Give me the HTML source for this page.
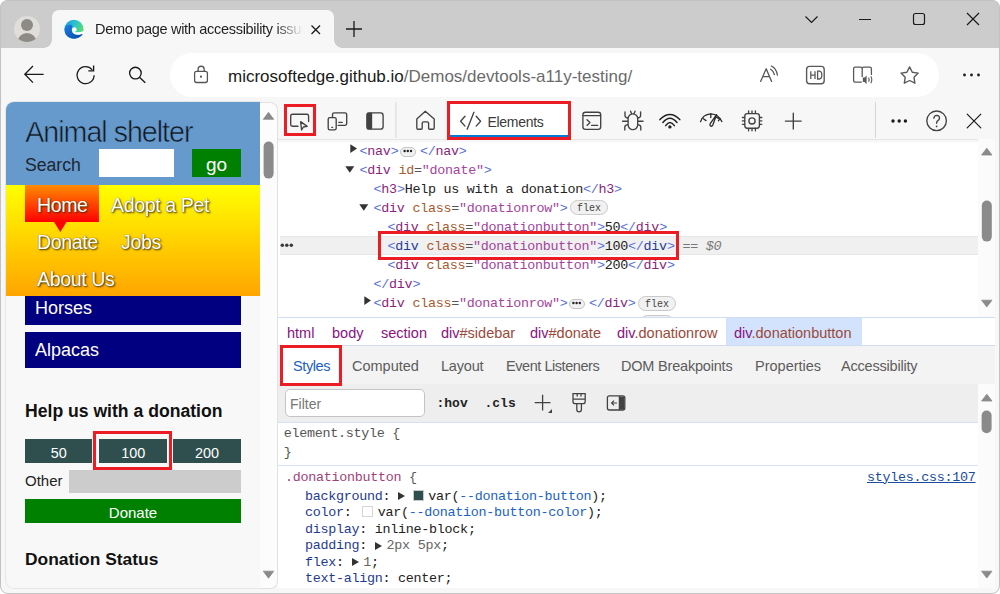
<!DOCTYPE html>
<html><head><meta charset="utf-8">
<style>
*{box-sizing:border-box;margin:0;padding:0}
html,body{width:1000px;height:594px;overflow:hidden;background:#fff}
body{font-family:"Liberation Sans",sans-serif;position:relative}
.a{position:absolute}
.mono{font-family:"Liberation Mono",monospace}
svg{position:absolute;overflow:visible}
#win{left:0;top:0;width:1000px;height:594px;border-radius:8px;background:#f7f7f7;overflow:hidden}
#winb{left:0;top:0;width:1000px;height:594px;border-radius:8px;border:1px solid #c2c2c2;pointer-events:none}
#strip{left:0;top:0;width:1000px;height:48px;background:#cccccc}
#tab{left:52px;top:10px;width:282px;height:38px;background:#f7f7f7;border-radius:7px 7px 0 0}
#tab:before,#tab:after{content:"";position:absolute;bottom:0;width:8px;height:8px}
#tab:before{left:-8px;background:radial-gradient(circle at 0 0,#cccccc 7.5px,#f7f7f7 8px)}
#tab:after{right:-8px;background:radial-gradient(circle at 100% 0,#cccccc 7.5px,#f7f7f7 8px)}
#addr{left:170px;top:53px;width:769px;height:44px;background:#fff;border-radius:22px}
#page{left:6px;top:102px;width:253.7px;height:486px;border-radius:8px 0 0 8px;overflow:hidden;background:#f8f8f8;box-shadow:0 0 0 1px #e6e6e6}
#dt{left:278px;top:102px;width:717px;height:486px;background:#fff;overflow:hidden}

.nav{font-size:19.5px;letter-spacing:-0.35px;line-height:24px;color:#fff;white-space:nowrap;text-shadow:1px 1px 2px #3a2a00,0 0 1px #6a5000}
.blk{width:216px;background:#000080;color:#fff;font-size:18px;padding-left:10px}
.dbtn{height:24px;background:#2f4f4f;color:#fff;font-size:14.4px;line-height:28px;text-align:center}

.dom{font-size:13.4px;letter-spacing:-0.28px;line-height:19px;margin-top:1px;white-space:pre;color:#333}
.dom .b{color:#5a72d6}.dom .t{color:#8a1f7c}.dom .n{color:#a65a2e}.dom .e{color:#555}.dom .v{color:#a3449c}.dom .x{color:#222}
.dom.sel .t{color:#1f3b9a}
.dots{display:inline-block;vertical-align:top;width:15.6px;height:10.5px;margin:5.1px 4.2px 0 1.7px;border:1px solid #c4c4c4;background:#f1f1f1;border-radius:5.5px;font-size:0;color:transparent}
.badge{height:15px;border:1px solid #c9c9c9;background:#f1f1f1;border-radius:8px;font-family:"Liberation Mono",monospace;font-size:10px;line-height:15px;text-align:center;color:#444}

.crumbs{top:322.5px;font-size:14.5px;line-height:20px;color:#881280;white-space:nowrap}
.crumbs .ci{color:#9a4a3a}
.tabs{top:356px;font-size:14.5px;line-height:20px;color:#5c5c5c;white-space:nowrap}
.css{font-size:13.4px;letter-spacing:-0.28px;line-height:19px;white-space:pre}
.css2{font-size:13.4px;letter-spacing:-0.28px;line-height:16.5px;white-space:pre;color:#222}
.css2 .p{color:#1f3a93}.css2 .vv{color:#1a62c4}
.tri{display:inline-block;width:0;height:0;border-left:7.4px solid #333;border-top:4.2px solid transparent;border-bottom:4.2px solid transparent;margin-right:4.8px;vertical-align:-0.5px}
.sw{display:inline-block;width:10.8px;height:10.6px;border:1px solid #c8c8c8;vertical-align:-1px}
</style></head><body>
<div id="win" class="a">
  <div id="strip" class="a"></div>
  <div id="tab" class="a"></div>
  
  <!-- avatar -->
  <svg style="left:0;top:0" width="60" height="48">
    <defs><clipPath id="avc"><circle cx="27" cy="29" r="13"/></clipPath></defs>
    <circle cx="27" cy="29" r="13" fill="#e0dedb"/>
    <circle cx="27" cy="25" r="6" fill="#8e8a86"/>
    <ellipse cx="27" cy="42.5" rx="9.5" ry="9.5" fill="#8e8a86" clip-path="url(#avc)"/>
  </svg>
  <!-- edge logo -->
  <svg style="left:0;top:0" width="120" height="48">
    <defs>
      <linearGradient id="eg1" x1="0" y1="0.3" x2="1" y2="0.7">
        <stop offset="0" stop-color="#1e9de0"/><stop offset="0.45" stop-color="#2dc3cf"/><stop offset="1" stop-color="#5de55f"/>
      </linearGradient>
      <linearGradient id="eg2" x1="0" y1="0" x2="1" y2="1">
        <stop offset="0" stop-color="#1a7fe0"/><stop offset="1" stop-color="#0a45a8"/>
      </linearGradient>
    </defs>
    <circle cx="74" cy="29.2" r="9.5" fill="url(#eg1)"/>
    <path d="M64.5 30 C64.6 26 68.5 24.2 71.5 25 C73.2 25.6 72.4 27.2 72 29.4 C71.6 32.6 74.6 34.9 78.2 34.7 C80.2 34.6 81.8 34.2 83.1 33.6 C81.4 36.9 78.2 38.8 74 38.8 C68.8 38.8 64.5 34.8 64.5 30Z" fill="url(#eg2)"/>
    <circle cx="74.3" cy="29.6" r="2.4" fill="#fff"/>
    <path d="M71.9 30 C72.2 31.6 74 32.2 76 32.3 C78.5 32.4 81.5 32 84 31 L84 33.2 C81.6 34.3 80 34.6 78 34.7 C74.5 34.9 71.8 32.8 71.9 30Z" fill="#fff"/>
  </svg>
  <div class="a" style="left:95px;top:20px;width:210px;height:20px;font-size:14.5px;letter-spacing:-0.3px;line-height:18px;color:#1f1f1f;white-space:nowrap;overflow:hidden;-webkit-mask-image:linear-gradient(90deg,#000 180px,transparent 208px)">Demo page with accessibility issues</div>
  <!-- tab close -->
  <svg style="left:0;top:0" width="400" height="48"><path d="M311.5 25.5 L320 34 M320 25.5 L311.5 34" stroke="#1a1a1a" stroke-width="1.3" fill="none"/></svg>
  <!-- new tab plus -->
  <svg style="left:0;top:0" width="400" height="48"><path d="M354 21 V37 M346 29 H362" stroke="#1a1a1a" stroke-width="1.3" fill="none"/></svg>
  <!-- window controls -->
  <svg style="left:0;top:0" width="1000" height="48">
    <path d="M805.5 16.5 L811.5 22.5 L817.5 16.5" stroke="#1a1a1a" stroke-width="1.2" fill="none"/>
    <path d="M859 19.5 H871" stroke="#1a1a1a" stroke-width="1.2"/>
    <rect x="913.5" y="13.5" width="11" height="11" rx="2" stroke="#1a1a1a" stroke-width="1.2" fill="none"/>
    <path d="M967 13 L979 25 M979 13 L967 25" stroke="#1a1a1a" stroke-width="1.2" fill="none"/>
  </svg>
  <!-- nav buttons -->
  <svg style="left:0;top:48" width="200" height="54">
  </svg>
  <svg style="left:0;top:0" width="200" height="100">
    <path d="M24.8 74.3 H43.6 M33 66 L24.8 74.3 L33 82.6" stroke="#1a1a1a" stroke-width="1.3" fill="none"/>
    <path d="M94.1 75.2 A8.5 8.5 0 1 1 92.2 69.8" stroke="#1a1a1a" stroke-width="1.3" fill="none"/>
    <path d="M93.6 65.6 V70.9 H88.3" stroke="#1a1a1a" stroke-width="1.4" fill="none" stroke-linejoin="miter"/>
    <circle cx="135.4" cy="73.1" r="5.8" stroke="#1a1a1a" stroke-width="1.35" fill="none"/>
    <path d="M139.7 77.5 L145.3 82.8" stroke="#1a1a1a" stroke-width="1.4" fill="none"/>
  </svg>

  <div id="addr" class="a"></div>
  <svg style="left:0;top:0" width="1000" height="100">
    <path d="M198.1 71.3 V69.3 A3.05 3.05 0 0 1 204.2 69.3 V71.3" stroke="#555" stroke-width="1.3" fill="none"/>
    <rect x="194.6" y="71.3" width="12.8" height="11.2" rx="2" stroke="#555" stroke-width="1.3" fill="none"/>
    <circle cx="201" cy="76.7" r="1.1" fill="#555"/>
  </svg>
  <div class="a" style="left:228px;top:66.5px;font-size:17px;line-height:20px;white-space:nowrap;color:#1a1a1a">microsoftedge.github.io<span style="color:#6b6b6b">/Demos/devtools-a11y-testing/</span></div>
  <svg style="left:0;top:0" width="1000" height="100">
    <!-- read aloud A -->
    <path d="M760.6 81.4 L766.2 68.8 L771.6 81.4 M763.2 76.7 H769.6" stroke="#555" stroke-width="1.3" fill="none" stroke-linecap="round" stroke-linejoin="round"/>
    <path d="M770.6 69.2 Q773.6 70.8 774.4 74.6 M771.4 66 Q776.4 68.4 777.4 75" stroke="#555" stroke-width="1.3" fill="none" stroke-linecap="round"/>
    <!-- HD -->
    <rect x="806.6" y="66.4" width="17.6" height="17.4" rx="3" stroke="#5a5a5a" stroke-width="1.4" fill="none"/>
    <path d="M810.8 71.2 V79 M815 71.2 V79 M810.8 75.1 H815 M817.6 71.2 V79 H819.2 Q821.8 79 821.8 75.1 Q821.8 71.2 819.2 71.2 Z" stroke="#5a5a5a" stroke-width="1.3" fill="none"/>
    <!-- reader -->
    <path d="M861.8 82.2 H855 Q853.6 82.2 853.6 80.8 V68.6 Q853.6 67.2 855 67.2 H860.6 Q862.2 67.2 862.2 68.8 V77 M862.2 68.8 Q862.2 67.2 863.8 67.2 H869.8 Q871.4 67.2 871.4 68.8 V75" stroke="#5a5a5a" stroke-width="1.3" fill="none"/>
    <path d="M862.8 77.6 H864.6 L866.6 75.4 V84.2 L864.6 82 H862.8 Z" fill="#5a5a5a"/>
    <path d="M868.6 77.4 Q869.8 79.6 868.6 81.8 M870.8 76.2 Q872.8 79.6 870.8 83.2" stroke="#5a5a5a" stroke-width="1.1" fill="none"/>
    <!-- star -->
    <path d="M909.6 66.9 L912.3 72.2 L918.2 73.1 L914.0 77.3 L914.9 83.2 L909.6 80.5 L904.3 83.2 L905.2 77.3 L901.0 73.1 L906.9 72.2 Z" stroke="#5a5a5a" stroke-width="1.4" fill="none" stroke-linejoin="round"/>
    <!-- more dots -->
    <circle cx="964.5" cy="75" r="1.4" fill="#1a1a1a"/><circle cx="971.5" cy="75" r="1.4" fill="#1a1a1a"/><circle cx="978.5" cy="75" r="1.4" fill="#1a1a1a"/>
  </svg>

  <!-- PAGE -->
  
  <div id="page" class="a">
    <div class="a" style="left:0;top:0;width:254px;height:82.5px;background:#6699cc"></div>
    <div class="a" id="t_title" style="left:19.3px;top:13.8px;font-size:28.6px;letter-spacing:-1px;line-height:32px;color:#101820;-webkit-text-stroke:0.6px #6699cc;white-space:nowrap">Animal shelter</div>
    <div class="a" id="t_search" style="left:19px;top:53px;font-size:17.6px;line-height:20px;color:#1e2630">Search</div>
    <div class="a" style="left:92.5px;top:47.4px;width:75px;height:27.2px;background:#fff"></div>
    <div class="a" style="left:186px;top:47px;width:49px;height:27.7px;background:#008000;color:#fff;font-size:19px;line-height:32px;text-align:center">go</div>
    <div class="a" style="left:0;top:82.5px;width:254px;height:111.5px;background:linear-gradient(#ffff00,#ffa500)"></div>
    <div class="a" style="left:19px;top:83px;width:73.6px;height:36.8px;background:linear-gradient(#ff8c00,#ff0000)"></div>
    <svg style="left:0;top:0" width="254" height="200"><path d="M47.9 119.7 L54.3 129.9 L60.7 119.7Z" fill="#ff0000"/></svg>
    <div class="a nav" style="left:31px;top:91px">Home</div>
    <div class="a nav" style="left:105px;top:91px">Adopt a Pet</div>
    <div class="a nav" style="left:31px;top:128px">Donate</div>
    <div class="a nav" style="left:115px;top:128px">Jobs</div>
    <div class="a nav" style="left:31px;top:165px">About Us</div>
    <div class="a blk" style="left:19px;top:194px;height:29px;line-height:25px">Horses</div>
    <div class="a blk" style="left:19px;top:229.6px;height:36px;line-height:36px">Alpacas</div>
    <div class="a" style="left:19px;top:299px;font-size:17.6px;line-height:20px;font-weight:bold;color:#111">Help us with a donation</div>
    <div class="a dbtn" style="left:19px;top:337.3px;width:67.4px">50</div>
    <div class="a dbtn" style="left:93px;top:337.3px;width:68.3px">100</div>
    <div class="a dbtn" style="left:167px;top:337.3px;width:68px">200</div>
    <div class="a" style="left:19px;top:370px;font-size:15px;line-height:18px;color:#222">Other</div>
    <div class="a" style="left:62.8px;top:367.9px;width:172.2px;height:22.7px;background:#cccccc"></div>
    <div class="a" style="left:19px;top:397px;width:216px;height:24.4px;background:#008000;color:#fff;font-size:15px;line-height:27.5px;text-align:center">Donate</div>
    <div class="a" style="left:19px;top:447px;font-size:17.4px;line-height:20px;font-weight:bold;color:#111">Donation Status</div>
    <div class="a" style="left:87.2px;top:329.3px;width:79px;height:39px;border:3px solid #ec1c24"></div>
  </div>
  <div class="a" style="left:259.7px;top:102px;width:18.5px;height:486.5px;background:#fcfcfc;border-radius:0 8px 8px 0;border:1px solid #e2e2e2;border-left:none"></div>
  <svg style="left:0;top:0" width="300" height="594">
    <path d="M263.3 119.3 L268.5 112.3 L273.7 119.3Z" fill="#8a8a8a" stroke="#8a8a8a" stroke-width="0.8" stroke-linejoin="round"/>
    <rect x="263.6" y="141.6" width="10" height="37" rx="5" fill="#8a8a8a"/>
    <path d="M263.3 571.2 L268.5 578.2 L273.7 571.2Z" fill="#8a8a8a" stroke="#8a8a8a" stroke-width="0.8" stroke-linejoin="round"/>
  </svg>

  <!-- DEVTOOLS -->

  <div id="dt" class="a"></div>
  <!-- devtools toolbar -->
  <div class="a" style="left:278px;top:102px;width:717px;height:38px;background:#f7f7f7;border-bottom:1px solid #e6e6e6"></div>
  <div class="a" style="left:278px;top:140px;width:700px;height:4px;background:linear-gradient(#f4f4f4,#fff)"></div>
  <div class="a" style="left:450px;top:104px;width:118.5px;height:34.5px;background:#fff"></div>
  <div class="a" style="left:450px;top:135px;width:118.5px;height:2px;background:#0078d4"></div>
  <svg style="left:0;top:0" width="1000" height="140" fill="none" stroke="#424242" stroke-width="1.35" stroke-linecap="round" stroke-linejoin="round">
    <!-- inspect -->
    <path d="M298 126.2 H292.5 Q290.7 126.2 290.7 124.4 V116 Q290.7 114.2 292.5 114.2 H306.8 Q308.6 114.2 308.6 116 V121.5"/>
    <path d="M300.6 121.6 L301.6 130 L303.4 127 L307.2 126.4 Z"/>
    <!-- device -->
    <path d="M332.5 117 V114.6 Q332.5 112.9 334.2 112.9 H345 Q346.7 112.9 346.7 114.6 V123.6 Q346.7 125.3 345 125.3 H338.2"/>
    <rect x="328.2" y="117.6" width="8" height="12.2" rx="1.6"/>
    <path d="M331.8 127.3 H332.6 M338.8 122.3 H342.2"/>
    <!-- dock -->
    <rect x="366.9" y="112.9" width="16.2" height="16.2" rx="2.4"/>
    <path d="M367.5 113.5 H371.5 V128.5 H367.5 Z" fill="#424242"/>
    <!-- home -->
    <path d="M425.3 111.2 L416.8 118.9 V128 Q416.8 129.2 418 129.2 H421.2 Q422.2 129.2 422.2 128.2 V123.2 Q422.2 121.8 423.6 121.8 H427.2 Q428.6 121.8 428.6 123.2 V128.2 Q428.6 129.2 429.6 129.2 H433 Q434.2 129.2 434.2 128 V118.9 Z"/>
    <!-- elements -->
    <path d="M465 116.3 L460.6 121.2 L465 126.1 M476.2 116.3 L480.6 121.2 L476.2 126.1 M473.9 112.3 L467.2 129.2"/>
    <!-- console -->
    <rect x="582.9" y="112.2" width="17.8" height="17.2" rx="2.6"/>
    <path d="M583 115.6 H600.6"/>
    <path d="M587 119.8 L590 122.6 L587 125.4 M591.6 125.4 H597.6"/>
    <!-- bug -->
    <path d="M630.6 111.2 L631.6 113.8 M635 111.2 L634 113.8"/>
    <rect x="628.1" y="113.8" width="9.6" height="15.8" rx="4.8"/>
    <path d="M625 111.8 V115.8 Q625 117.4 627.6 118 M640.6 111.8 V115.8 Q640.6 117.4 638 118 M622.6 121.2 H627.6 M643 121.2 H638 M627.6 124.6 Q624.8 125.2 624.8 127 V130 M638 124.6 Q640.8 125.2 640.8 127 V130"/>
    <!-- wifi -->
    <path d="M659.9 119.6 Q669.9 109.2 679.8 119.6 M662.9 122.4 Q669.9 113.9 677 122.4 M665.7 125.6 Q669.9 119.2 674.4 125.6" stroke="#222" stroke-width="1.5"/>
    <circle cx="669.9" cy="126.9" r="1.7" fill="#222" stroke="none"/>
    <!-- perf -->
    <path d="M700.6 121.6 Q702.6 114.4 710.8 113.8 Q718.6 114.2 721.8 121.6" stroke="#2a2a2a" stroke-width="1.35"/>
    <path d="M703.4 118.8 L706 120.6 M710.8 114 V117.6 M718.4 120.8 L720 118.6 M716 117 L718.4 118.4" stroke="#2a2a2a" stroke-width="1.3"/>
    <path d="M716.6 114.6 L712.8 125 Q711.8 126.8 710.4 126 Q709.4 125.2 710.4 123.4 Z" stroke="#2a2a2a" stroke-width="1.3"/>
    <!-- memory -->
    <rect x="744.8" y="113.6" width="14.6" height="14.6" rx="2.4"/>
    <circle cx="752" cy="120.9" r="3.1"/>
    <path d="M748.6 111 V113.4 M752 111 V113.4 M755.4 111 V113.4 M748.6 128.4 V130.8 M752 128.4 V130.8 M755.4 128.4 V130.8 M742.4 117.5 H744.6 M742.4 120.9 H744.6 M742.4 124.3 H744.6 M759.6 117.5 H761.8 M759.6 120.9 H761.8 M759.6 124.3 H761.8"/>
    <!-- plus -->
    <path d="M793.3 113.2 V129 M785.4 121.1 H801.2"/>
    <!-- help -->
    <circle cx="936.6" cy="120.8" r="9.8"/>
    <path d="M933.9 118.2 Q934.1 115.3 936.8 115.3 Q939.5 115.4 939.5 117.9 Q939.5 119.7 937.8 120.7 Q936.6 121.3 936.6 123.3"/>
    <circle cx="936.6" cy="126.4" r="0.9" fill="#424242" stroke="none"/>
    <!-- close -->
    <path d="M967.2 114.2 L980.8 127.8 M980.8 114.2 L967.2 127.8" stroke="#1a1a1a" stroke-width="1.2"/>
  </svg>
  <svg style="left:0;top:0" width="1000" height="140">
    <circle cx="893" cy="121" r="1.7" fill="#1a1a1a"/><circle cx="899.2" cy="121" r="1.7" fill="#1a1a1a"/><circle cx="905.4" cy="121" r="1.7" fill="#1a1a1a"/>
    <rect x="395.4" y="102" width="1" height="36" fill="#d6d6d6"/>
    <rect x="875" y="102" width="1" height="36" fill="#d6d6d6"/>
  </svg>
  <div class="a" style="left:487.5px;top:113px;font-size:14px;letter-spacing:-0.3px;line-height:18px;color:#3a3a3a">Elements</div>
  <div class="a" style="left:284.2px;top:104px;width:31.8px;height:31.8px;border:3px solid #ec1c24"></div>
  <div class="a" style="left:447.3px;top:101.1px;width:123.5px;height:38.9px;border:3px solid #ec1c24"></div>
  <!-- elements tree -->
  <div class="a" style="left:280px;top:236px;width:698px;height:18.5px;background:#f0f0f0;border-top:1px solid #e6e6e6;border-bottom:1px solid #e6e6e6"></div>
  <div class="a mono dom" style="left:359.6px;top:140.5px"><span class="b">&lt;</span><span class="t">nav</span><span class="b">&gt;</span><span class="dots">&#8226;&#8226;&#8226;</span><span class="b">&lt;/</span><span class="t">nav</span><span class="b">&gt;</span></div>
  <div class="a mono dom" style="left:359.6px;top:159.5px"><span class="b">&lt;</span><span class="t">div</span> <span class="n">id</span><span class="e">=</span><span class="v">"donate"</span><span class="b">&gt;</span></div>
  <div class="a mono dom" style="left:373.6px;top:178.5px"><span class="b">&lt;</span><span class="t">h3</span><span class="b">&gt;</span><span class="x">Help us with a donation</span><span class="b">&lt;/</span><span class="t">h3</span><span class="b">&gt;</span></div>
  <div class="a mono dom" style="left:373.6px;top:197.5px"><span class="b">&lt;</span><span class="t">div</span> <span class="n">class</span><span class="e">=</span><span class="v">"donationrow"</span><span class="b">&gt;</span></div>
  <div class="a mono dom" style="left:387.6px;top:216.5px"><span class="b">&lt;</span><span class="t">div</span> <span class="n">class</span><span class="e">=</span><span class="v">"donationbutton"</span><span class="b">&gt;</span><span class="x">50</span><span class="b">&lt;/</span><span class="t">div</span><span class="b">&gt;</span></div>
  <div class="a mono dom sel" style="left:387.6px;top:235.5px"><span class="b">&lt;</span><span class="t">div</span> <span class="n">class</span><span class="e">=</span><span class="v">"donationbutton"</span><span class="b">&gt;</span><span class="x">100</span><span class="b">&lt;/</span><span class="t">div</span><span class="b">&gt;</span> <i style="color:#777">== $0</i></div>
  <div class="a mono dom" style="left:387.6px;top:254.5px"><span class="b">&lt;</span><span class="t">div</span> <span class="n">class</span><span class="e">=</span><span class="v">"donationbutton"</span><span class="b">&gt;</span><span class="x">200</span><span class="b">&lt;/</span><span class="t">div</span><span class="b">&gt;</span></div>
  <div class="a mono dom" style="left:373.6px;top:273.5px"><span class="b">&lt;/</span><span class="t">div</span><span class="b">&gt;</span></div>
  <div class="a mono dom" style="left:373.6px;top:292.5px"><span class="b">&lt;</span><span class="t">div</span> <span class="n">class</span><span class="e">=</span><span class="v">"donationrow"</span><span class="b">&gt;</span><span class="dots">&#8226;&#8226;&#8226;</span><span class="b">&lt;/</span><span class="t">div</span><span class="b">&gt;</span></div>
  <svg style="left:0;top:0" width="1000" height="594">
    <circle cx="404.6" cy="151" r="1.2" fill="#222"/><circle cx="407.8" cy="151" r="1.2" fill="#222"/><circle cx="411" cy="151" r="1.2" fill="#222"/><circle cx="573.4" cy="303" r="1.2" fill="#222"/><circle cx="576.6" cy="303" r="1.2" fill="#222"/><circle cx="579.8" cy="303" r="1.2" fill="#222"/>
    <circle cx="282.3" cy="245.3" r="1.75" fill="#3a3a3a"/><circle cx="286.8" cy="245.3" r="1.75" fill="#3a3a3a"/><circle cx="291.3" cy="245.3" r="1.75" fill="#3a3a3a"/>
    <path d="M350.3 144.2 L357 148.6 L350.3 153Z" fill="#333"/>
    <path d="M345.3 166.2 L354.3 166.2 L349.8 172.8Z" fill="#333"/>
    <path d="M359.3 204.2 L368.3 204.2 L363.8 210.8Z" fill="#333"/>
    <path d="M364.3 296.2 L371 300.6 L364.3 305Z" fill="#333"/>
  </svg>
  <div class="a badge" style="left:570px;top:200px;width:38px">flex</div>
  <div class="a badge" style="left:638px;top:296px;width:38px">flex</div>
  <div class="a" style="left:640px;top:314.5px;width:34px;height:2px;overflow:hidden"><div class="badge" style="width:34px"></div></div>
  <div class="a" style="left:378.3px;top:231.3px;width:300.7px;height:28.5px;border:3px solid #ec1c24"></div>
  <!-- elements scrollbar -->
  <div class="a" style="left:978px;top:139px;width:17px;height:178px;background:#fbfbfb"></div>
  <svg style="left:0;top:0" width="1000" height="594">
    <path d="M981.6 155 L986.8 148.2 L992 155Z" fill="#8a8a8a" stroke="#8a8a8a" stroke-width="0.8" stroke-linejoin="round"/>
    <rect x="981.8" y="200.6" width="10" height="41" rx="5" fill="#8a8a8a"/>
    <path d="M981.6 300.2 L986.8 307 L992 300.2Z" fill="#8a8a8a" stroke="#8a8a8a" stroke-width="0.8" stroke-linejoin="round"/>
  </svg>
  <div class="a" style="left:278px;top:316.5px;width:717px;height:1px;background:#cfdcf1"></div>
  <!-- breadcrumbs -->
  <div class="a" style="left:726px;top:317.5px;width:136px;height:27.5px;background:#d3e3fd"></div>
  <div class="a crumbs" style="left:287px">html</div>
  <div class="a crumbs" style="left:332px">body</div>
  <div class="a crumbs" style="left:381px">section</div>
  <div class="a crumbs" style="left:441px">div<span class="ci">#sidebar</span></div>
  <div class="a crumbs" style="left:530px">div<span class="ci">#donate</span></div>
  <div class="a crumbs" style="left:617px">div<span class="ci">.donationrow</span></div>
  <div class="a crumbs" style="left:734px">div<span class="ci">.donationbutton</span></div>
  <div class="a" style="left:278px;top:344.5px;width:717px;height:1px;background:#cfdcf1"></div>
  <!-- tabs -->
  <div class="a" style="left:278px;top:345.5px;width:717px;height:38.5px;background:#f3f3f3"></div>
  <div class="a" style="left:281px;top:347px;width:59px;height:37px;background:#fff"></div>
  <div class="a tabs" style="left:293px;color:#1a5fc4;letter-spacing:-0.4px">Styles</div>
  <div class="a tabs" style="left:352px">Computed</div>
  <div class="a tabs" style="left:441px;letter-spacing:-0.2px">Layout</div>
  <div class="a tabs" style="left:506px;letter-spacing:-0.45px">Event Listeners</div>
  <div class="a tabs" style="left:621px;letter-spacing:-0.2px">DOM Breakpoints</div>
  <div class="a tabs" style="left:755px">Properties</div>
  <div class="a tabs" style="left:841px;letter-spacing:-0.2px">Accessibility</div>
  <div class="a" style="left:278px;top:384px;width:700px;height:37.5px;background:#eeeeee"></div>
  <div class="a" style="left:978px;top:384px;width:17px;height:204px;background:#fbfbfb"></div>
  <div class="a" style="left:285px;top:389px;width:140px;height:27.6px;background:#fff;border:1px solid #c4c4c4;border-radius:5px"></div>
  <div class="a" style="left:278px;top:421.5px;width:700px;height:1px;background:#d6e2f4"></div>
  <div class="a" style="left:290px;top:395px;font-size:14px;line-height:18px;color:#767676">Filter</div>
  <div class="a mono" style="left:436.5px;top:395px;font-size:13px;line-height:18px;font-weight:bold;color:#222">:hov</div>
  <div class="a mono" style="left:484.5px;top:395px;font-size:13px;line-height:18px;font-weight:bold;color:#222">.cls</div>
  <svg style="left:0;top:0" width="1000" height="594" fill="none" stroke="#424242" stroke-width="1.3">
    <path d="M542.6 394.8 V410.6 M534.7 402.7 H550.5"/>
    <path d="M548 413 L552 413 L552 409 Z" fill="#424242" stroke="none"/>
    <path d="M573 393.6 H585.2 V401.4 Q585.2 403.6 583 403.6 H575.2 Q573 403.6 573 401.4 Z M573 399.2 H585.2 M577.2 393.8 V396.6 M581 393.8 V396.6 M576.8 403.6 V409.4 Q576.8 411.8 579.1 411.8 Q581.4 411.8 581.4 409.4 V403.6"/>
    <rect x="607.4" y="395.8" width="17.4" height="14.2" rx="2"/>
    <path d="M619.4 396 V410" />
    <path d="M620 396.5 H624.2 V409.5 H620 Z" fill="#424242" stroke="none"/>
    <path d="M617 403 H611.6 M614 400.6 L611.6 403 L614 405.4" stroke-width="1.2"/>
  </svg>
  <div class="a mono css" style="left:283.7px;top:424px;color:#555">element.style {</div>
  <div class="a mono css" style="left:283.7px;top:443px;color:#555">}</div>
  <div class="a mono css" style="left:285px;top:467.5px"><span style="color:#a03f7a">.donationbutton</span> <span style="color:#555">{</span></div>
  <div class="a mono css" style="left:867px;top:467.5px;color:#1a4d9e;text-decoration:underline">styles.css:107</div>
  <div class="a mono css2" style="left:305px;top:488.5px"><span class="p">background</span>: <span class="tri"></span><span class="sw" style="background:#2f4f4f;margin-left:3px;margin-right:4.6px"></span>var(<span class="vv">--donation-button</span>);</div>
  <div class="a mono css2" style="left:305px;top:505px"><span class="p">color</span>: <span class="sw" style="background:#fff;margin-left:3.2px;margin-right:4.4px;border-color:#d6d6d6"></span>var(<span class="vv">--donation-button-color</span>);</div>
  <div class="a mono css2" style="left:305px;top:521.5px"><span class="p">display</span>: inline-block;</div>
  <div class="a mono css2" style="left:305px;top:538px"><span class="p">padding</span>: <span class="tri"></span><span style="color:#666">2px 5px</span>;</div>
  <div class="a mono css2" style="left:305px;top:554.5px"><span class="p">flex</span>: <span class="tri"></span><span style="color:#666">1</span>;</div>
  <div class="a mono css2" style="left:305px;top:571px"><span class="p">text-align</span>: center;</div>
  <div class="a" style="left:278px;top:464.5px;width:700px;height:1px;background:#d6e2f4"></div>
  <svg style="left:0;top:0" width="1000" height="594">
    <path d="M981.6 401 L986.8 394.2 L992 401Z" fill="#8a8a8a" stroke="#8a8a8a" stroke-width="0.8" stroke-linejoin="round"/>
    <rect x="981.6" y="410.6" width="10" height="22.6" rx="5" fill="#8a8a8a"/>
    <path d="M981.6 571.2 L986.8 578 L992 571.2Z" fill="#8a8a8a" stroke="#8a8a8a" stroke-width="0.8" stroke-linejoin="round"/>
  </svg>
  <div class="a" style="left:279.5px;top:345px;width:62px;height:40.5px;border:3px solid #ec1c24"></div>
</div>
<div id="winb" class="a"></div>
</body></html>
